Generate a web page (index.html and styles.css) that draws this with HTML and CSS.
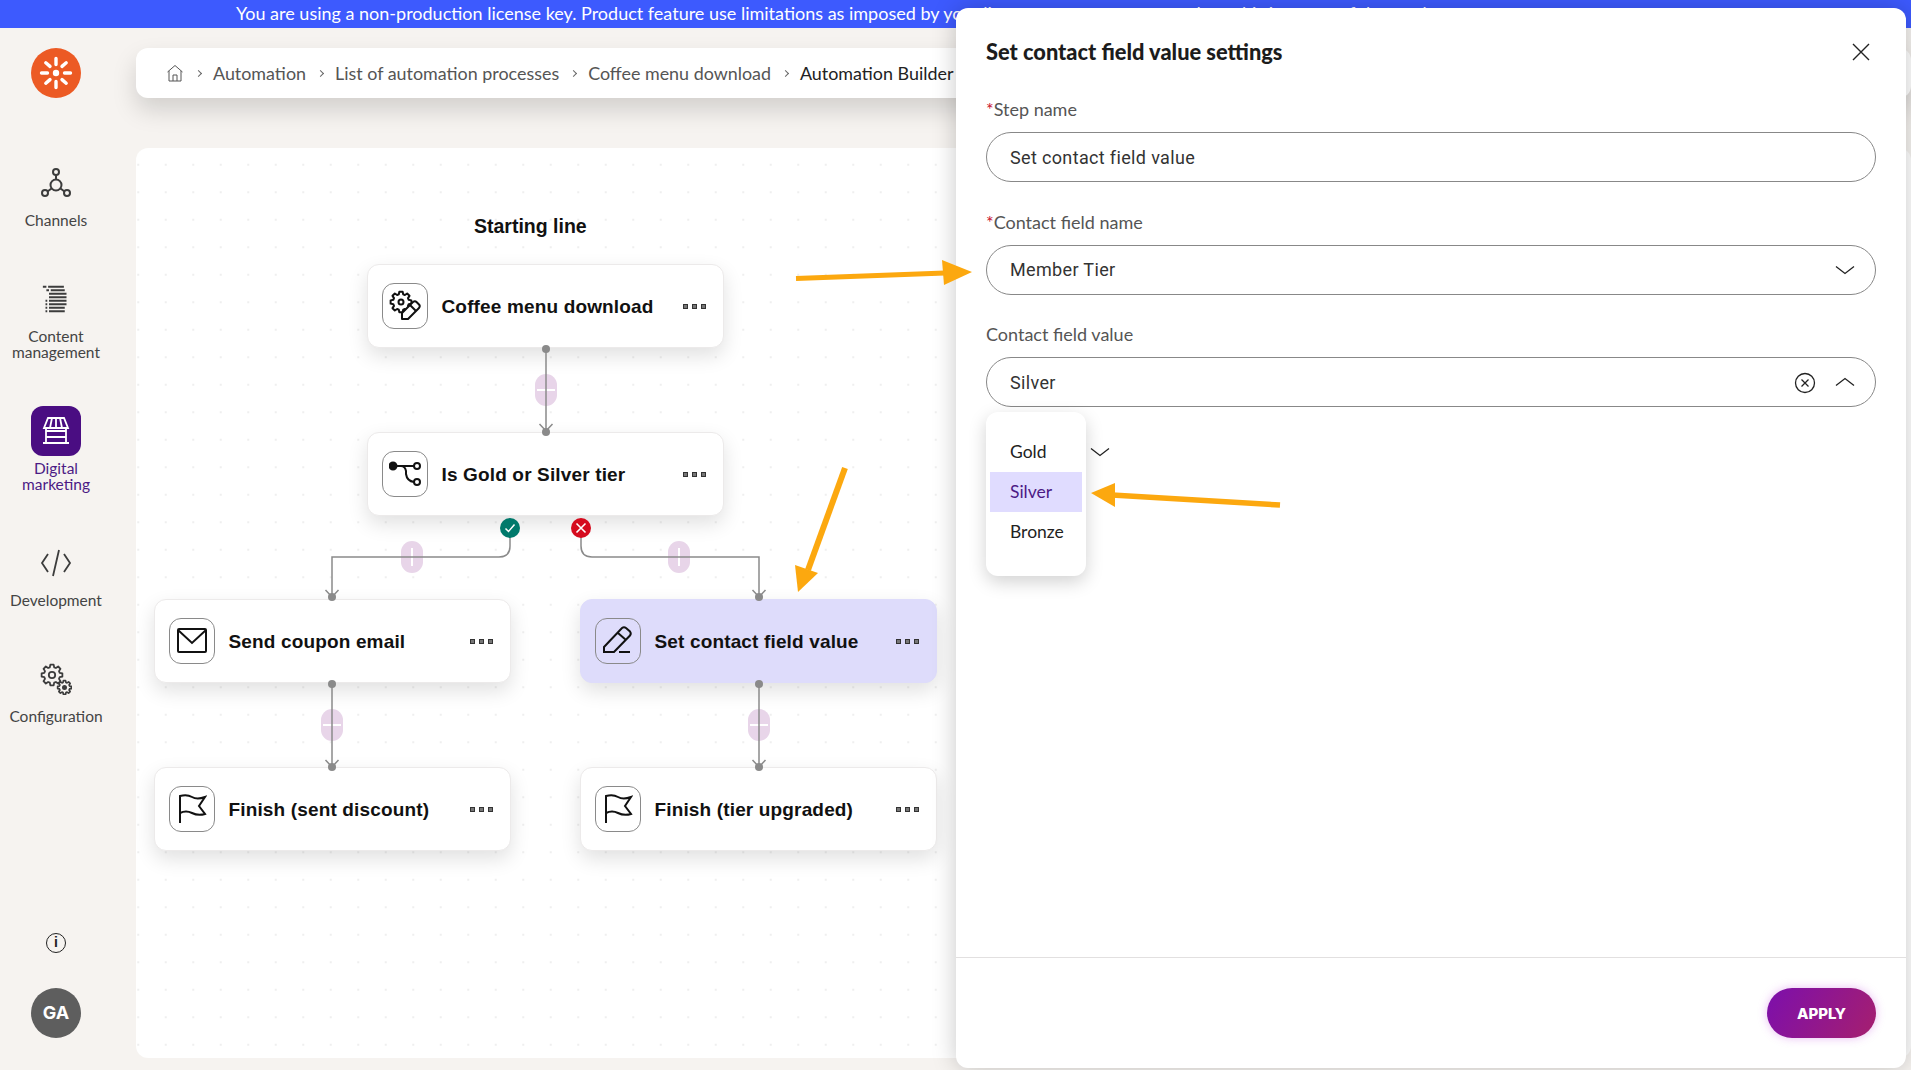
FILE: index.html
```html
<!DOCTYPE html>
<html lang="en">

<head>
  <meta charset="UTF-8">
  <title>Automation Builder</title>
  <link rel="stylesheet" href="styles.css">
</head>

<body>

  <div class="banner">You are using a non-production license key. Product feature use limitations as imposed by your license agreement may apply to this instance of the product.</div>

  <div class="layout">

    <aside class="sidebar">
      <div class="logo">
        <svg width="50" height="50" viewBox="0 0 50 50">
          <g stroke="#fff" stroke-width="3.4" stroke-linecap="round">
            <path d="M25 10.5v6M25 33.5v6M10.5 25h6M33.5 25h6M14.8 14.8l4.2 3.6M31 31.6l4.2 3.6M35.2 14.8l-4.2 3.6M19 31.6l-4.2 3.6"/>
          </g>
          <circle cx="25" cy="25" r="3.2" fill="#fff"/>
        </svg>
      </div>

      <nav class="nav">
        <div class="nav-item">
          <div class="nav-icon">
            <svg width="30" height="30" viewBox="0 0 30 30" fill="none" stroke="#3c3c3c" stroke-width="2">
              <circle cx="15" cy="4" r="3"/>
              <circle cx="15" cy="17" r="5.5"/>
              <circle cx="4" cy="25" r="3"/>
              <circle cx="26" cy="25" r="3"/>
              <path d="M15 7v4.5M10.5 20.5l-4 3M19.5 20.5l4 3"/>
            </svg>
          </div>
          <span>Channels</span>
        </div>

        <div class="nav-item">
          <div class="nav-icon">
            <svg width="28" height="30" viewBox="0 0 32 32" fill="none" stroke="#3c3c3c" stroke-width="2.2">
              <path d="M1 2h4M7 2h18M5 6h3M10 6h16M8 10h20M8 14h20M4 18h2M8 18h20M4 22h2M8 22h20M4 26h2M8 26h18M4 30h2M8 30h18"/>
            </svg>
          </div>
          <span>Content<br>management</span>
        </div>

        <div class="nav-item active">
          <div class="nav-icon">
            <svg width="30" height="30" viewBox="0 0 30 30" fill="none" stroke="#fff" stroke-width="1.8">
              <path d="M7 2h16l4 10H3zM11 2l-2 10M19 2l2 10M15 2v10"/>
              <path d="M5 12v15M25 12v15M2 27h26M5 21h20M5 15h20"/>
            </svg>
          </div>
          <span>Digital<br>marketing</span>
        </div>

        <div class="nav-item">
          <div class="nav-icon">
            <svg width="32" height="28" viewBox="0 0 32 28" fill="none" stroke="#3c3c3c" stroke-width="1.8">
              <path d="M8 5L2 14l6 9M24 5l6 9-6 9M19 1l-6 26"/>
            </svg>
          </div>
          <span>Development</span>
        </div>

        <div class="nav-item">
          <div class="nav-icon">
            <svg width="32" height="32" viewBox="0 0 32 32" fill="none" stroke="#3c3c3c" stroke-width="1.8" stroke-linejoin="round">
              <defs>
                <polygon id="gear" points="10.37,-1.64 10.37,1.64 7.69,2.2 7,3.88 8.49,6.17 6.17,8.49 3.88,7 2.2,7.69 1.64,10.37 -1.64,10.37 -2.2,7.69 -3.88,7 -6.17,8.49 -8.49,6.17 -7,3.88 -7.69,2.2 -10.37,1.64 -10.37,-1.64 -7.69,-2.2 -7,-3.88 -8.49,-6.17 -6.17,-8.49 -3.88,-7 -2.2,-7.69 -1.64,-10.37 1.64,-10.37 2.2,-7.69 3.88,-7 6.17,-8.49 8.49,-6.17 7,-3.88 7.69,-2.2"/>
              </defs>
              <use href="#gear" x="12" y="12"/>
              <circle cx="12" cy="12" r="3.2"/>
              <g transform="translate(24.5 24.5) scale(.66)" stroke-width="2.6">
                <use href="#gear" fill="#f6f3f0"/>
              </g>
              <circle cx="24.5" cy="24.5" r="1.6" fill="#3c3c3c"/>
            </svg>
          </div>
          <span>Configuration</span>
        </div>
      </nav>

      <div class="side-bottom">
        <div class="info">i</div>
        <div class="avatar">GA</div>
      </div>
    </aside>

    <main class="main">

      <div class="breadcrumb">
        <svg width="18" height="18" viewBox="0 0 18 18" fill="none" stroke="#555" stroke-width="1">
          <path d="M1.5 8L9 1.5 16.5 8M3 7v10h12V7M7 17v-6h4v6"/>
        </svg>
        <span class="sep"></span>
        <span>Automation</span>
        <span class="sep"></span>
        <span>List of automation processes</span>
        <span class="sep"></span>
        <span>Coffee menu download</span>
        <span class="sep"></span>
        <span class="current">Automation Builder</span>
      </div>

      <div class="canvas">
        <div class="start-title">Starting line</div>

        <!-- connectors, coordinates are relative to the canvas -->
        <svg class="wires" width="830" height="910" viewBox="0 0 830 910" fill="none">
          <g stroke="#8a8a8a" stroke-width="1.5">
            <path d="M410 201v82M403.5 276l6.5 7 6.5-7"/>
            <path d="M374 380v18q0 11-11 11H196v40M189.5 442l6.5 7 6.5-7"/>
            <path d="M445 380v18q0 11 11 11h167v40M616.5 442l6.5 7 6.5-7"/>
            <path d="M196 536v83M189.5 612l6.5 7 6.5-7"/>
            <path d="M623 536v83M616.5 612l6.5 7 6.5-7"/>
          </g>
          <g fill="#8a8a8a">
            <circle cx="410" cy="201" r="4"/><circle cx="410" cy="284" r="4"/>
            <circle cx="196" cy="449" r="4"/><circle cx="623" cy="449" r="4"/>
            <circle cx="196" cy="536" r="4"/><circle cx="196" cy="619" r="4"/>
            <circle cx="623" cy="536" r="4"/><circle cx="623" cy="619" r="4"/>
          </g>
        </svg>

        <div class="plus h" style="left: 399px; top: 226px;"></div>
        <div class="plus v" style="left: 265px; top: 393px;"></div>
        <div class="plus v" style="left: 532px; top: 393px;"></div>
        <div class="plus h" style="left: 185px; top: 561px;"></div>
        <div class="plus h" style="left: 612px; top: 561px;"></div>

        <div class="mark ok" style="left: 364px; top: 370px;">
          <svg width="12" height="12" viewBox="0 0 12 12" fill="none" stroke="#fff" stroke-width="1.5"><path d="M1.5 6.5l3 3 6-7"/></svg>
        </div>
        <div class="mark bad" style="left: 435px; top: 370px;">
          <svg width="12" height="12" viewBox="0 0 12 12" fill="none" stroke="#fff" stroke-width="1.6"><path d="M1.5 1.5l9 9M10.5 1.5l-9 9"/></svg>
        </div>

        <div class="node" style="left: 231px; top: 116px;">
          <div class="node-icon">
            <svg width="32" height="32" viewBox="0 0 32 32" fill="none" stroke="#111" stroke-width="2" stroke-linejoin="round">
              <use href="#gear" x="12" y="12"/>
              <circle cx="12" cy="12" r="2.5"/>
              <path d="M13 29v-6L24 12q2-1.5 3.5 0l2.5 2.5q1.5 1.5 0 3.5L19 29z" fill="#fff"/>
              <path d="M21 15l6 6"/>
            </svg>
          </div>
          <span class="node-name">Coffee menu download</span>
          <span class="dots"><i></i><i></i><i></i></span>
        </div>

        <div class="node" style="left: 231px; top: 284px;">
          <div class="node-icon">
            <svg width="32" height="32" viewBox="0 0 32 32" fill="none" stroke="#111" stroke-width="2">
              <circle cx="4" cy="8" r="3.5" fill="#111"/>
              <circle cx="28" cy="8" r="3"/>
              <circle cx="28" cy="24" r="3"/>
              <path d="M7 8h18M12 8q4 0 5 5v3q1 7 8 8"/>
            </svg>
          </div>
          <span class="node-name">Is Gold or Silver tier</span>
          <span class="dots"><i></i><i></i><i></i></span>
        </div>

        <div class="node" style="left: 18px; top: 451px;">
          <div class="node-icon">
            <svg width="30" height="26" viewBox="0 0 30 26" fill="none" stroke="#111" stroke-width="2">
              <rect x="1" y="1" width="28" height="23" rx="1"/>
              <path d="M1 2l14 13L29 2"/>
            </svg>
          </div>
          <span class="node-name">Send coupon email</span>
          <span class="dots"><i></i><i></i><i></i></span>
        </div>

        <div class="node selected" style="left: 444px; top: 451px;">
          <div class="node-icon">
            <svg width="32" height="32" viewBox="0 0 32 32" fill="none" stroke="#111" stroke-width="2">
              <path d="M2 22L20 3q2-1.5 4 0l4 3.5q1.5 2 0 4L12 27H2zM16 8l8 7M17 27h11"/>
            </svg>
          </div>
          <span class="node-name">Set contact field value</span>
          <span class="dots"><i></i><i></i><i></i></span>
        </div>

        <div class="node" style="left: 18px; top: 619px;">
          <div class="node-icon">
            <svg width="30" height="32" viewBox="0 0 30 32" fill="none" stroke="#111" stroke-width="2">
              <path d="M3 30V3q7-2 12 1t13 0l-6 9 6 8q-7 2-13-1t-12 0"/>
            </svg>
          </div>
          <span class="node-name">Finish (sent discount)</span>
          <span class="dots"><i></i><i></i><i></i></span>
        </div>

        <div class="node" style="left: 444px; top: 619px;">
          <div class="node-icon">
            <svg width="30" height="32" viewBox="0 0 30 32" fill="none" stroke="#111" stroke-width="2">
              <path d="M3 30V3q7-2 12 1t13 0l-6 9 6 8q-7 2-13-1t-12 0"/>
            </svg>
          </div>
          <span class="node-name">Finish (tier upgraded)</span>
          <span class="dots"><i></i><i></i><i></i></span>
        </div>
      </div>
    </main>
  </div>

  <section class="panel">
    <header class="panel-head">
      <h2>Set contact field value settings</h2>
      <svg width="20" height="20" viewBox="0 0 20 20" fill="none" stroke="#222" stroke-width="1.4"><path d="M2 2l16 16M18 2L2 18"/></svg>
    </header>

    <div class="panel-body">
      <div class="field">
        <label><b>*</b>Step name</label>
        <div class="input">Set contact field value</div>
      </div>
      <div class="field">
        <label><b>*</b>Contact field name</label>
        <div class="input">Member Tier
          <svg class="chev" width="20" height="10" viewBox="0 0 20 10" fill="none" stroke="#222" stroke-width="1.3"><path d="M1 1.5l9 7 9-7"/></svg>
        </div>
      </div>
      <div class="field">
        <label>Contact field value</label>
        <div class="input">Silver
          <svg class="clear" width="22" height="22" viewBox="0 0 22 22" fill="none" stroke="#222" stroke-width="1.3"><circle cx="11" cy="11" r="9.5"/><path d="M7.5 7.5l7 7M14.5 7.5l-7 7"/></svg>
          <svg class="chev" width="20" height="10" viewBox="0 0 20 10" fill="none" stroke="#222" stroke-width="1.3"><path d="M1 8.5l9-7 9 7"/></svg>
        </div>
        <div class="menu">
          <div class="opt">Gold</div>
          <div class="opt on">Silver</div>
          <div class="opt">Bronze</div>
        </div>
        <svg class="stray" width="20" height="10" viewBox="0 0 20 10" fill="none" stroke="#222" stroke-width="1.3"><path d="M1 1.5l9 7 9-7"/></svg>
      </div>
    </div>

    <footer class="panel-foot">
      <button class="apply">APPLY</button>
    </footer>
  </section>

  <!-- hand drawn annotation arrows on top of the screenshot -->
  <svg class="arrows" width="1911" height="1070" viewBox="0 0 1911 1070" fill="#fca80f" stroke="#fca80f">
    <path d="M796 278.5L945 273" stroke-width="5" fill="none"/>
    <path d="M972 272l-30-12 2 25z" stroke="none"/>
    <path d="M845 468l-37 102" stroke-width="6" fill="none"/>
    <path d="M798 592l-3-27 23 8z" stroke="none"/>
    <path d="M1280 505l-168-10" stroke-width="5.5" fill="none"/>
    <path d="M1091 493l24-10v24z" stroke="none"/>
  </svg>

</body>

</html>
```

FILE: styles.css
```css
* {
  box-sizing: border-box;
}

html,
body {
  margin: 0;
  height: 100%;
}

body {
  display: flex;
  flex-direction: column;
  height: 1070px;
  overflow: hidden;
  position: relative;
  background-color: #f6f3f0;
  font-family: "Lato", sans-serif;
  color: #333;
}

.banner {
  height: 28px;
  flex-shrink: 0;
  background-color: #3d5afe;
  color: #fff;
  font-size: 18px;
  line-height: 27px;
  padding-left: 236px;
  white-space: nowrap;
  overflow: hidden;
}

.layout {
  display: flex;
  flex: 1;
  min-height: 0;
}

.sidebar {
  width: 112px;
  flex-shrink: 0;
  display: flex;
  flex-direction: column;
  align-items: center;
  padding: 20px 0 32px;
}

.logo {
  width: 50px;
  height: 50px;
  border-radius: 50%;
  background-color: #ec5a24;
}

.nav {
  display: flex;
  flex-direction: column;
  gap: 46px;
  margin-top: 60px;
  width: 100%;
}

.nav-item {
  display: flex;
  flex-direction: column;
  align-items: center;
  text-align: center;
  font-size: 15.5px;
  line-height: 16px;
  color: #444;
}

.nav-icon {
  width: 50px;
  height: 50px;
  margin-bottom: 4px;
  border-radius: 12px;
  display: flex;
  align-items: center;
  justify-content: center;
}

.nav-item.active {
  color: #4c1a85;
}

.nav-item.active .nav-icon {
  background-color: #4a0d82;
}

.side-bottom {
  margin-top: auto;
  display: flex;
  flex-direction: column;
  align-items: center;
  gap: 35px;
}

.info {
  width: 20px;
  height: 20px;
  border: 1.5px solid #222;
  border-radius: 50%;
  font-family: "Liberation Sans", sans-serif;
  font-weight: bold;
  font-size: 14px;
  line-height: 17px;
  text-align: center;
  color: #222;
}

.avatar {
  width: 50px;
  height: 50px;
  border-radius: 50%;
  background-color: #5e5e5e;
  color: #fff;
  font-family: "Inter", sans-serif;
  font-weight: 700;
  font-size: 18px;
  line-height: 50px;
  text-align: center;
}

.main {
  flex: 1;
  min-width: 0;
  margin-left: 24px;
  padding: 20px 0 12px;
  display: flex;
  flex-direction: column;
  gap: 50px;
}

.breadcrumb {
  height: 50px;
  flex-shrink: 0;
  display: flex;
  align-items: center;
  gap: 12px;
  padding-left: 30px;
  background-color: #fff;
  border-radius: 12px;
  box-shadow: 0 12px 24px rgba(0, 0, 0, 0.15);
  font-size: 17.9px;
  color: #555;
}

.breadcrumb .current {
  color: #222;
}

.sep {
  width: 5px;
  height: 5px;
  border-top: 1px solid #666;
  border-right: 1px solid #666;
  transform: rotate(45deg);
}

.canvas {
  flex: 1;
  position: relative;
  background-color: #fff;
  background-image: radial-gradient(#efefef 0.8px, transparent 1px);
  background-size: 27.5px 27.5px;
  background-position: 16px 3px;
  border-radius: 12px;
  overflow: hidden;
}

.start-title {
  position: absolute;
  left: 338px;
  top: 67px;
  font-family: "Liberation Sans", sans-serif;
  font-weight: bold;
  font-size: 19.5px;
  color: #111;
}

.wires {
  position: absolute;
  left: 0;
  top: 0;
  z-index: 2;
}

.plus {
  position: absolute;
  z-index: 1;
  width: 22px;
  height: 32px;
  border-radius: 11px;
  background-color: #e8d5e9;
}

.plus::after {
  content: "";
  position: absolute;
  background-color: #fff;
}

.plus.h::after {
  left: 2px;
  right: 2px;
  top: 15px;
  height: 2px;
}

.plus.v::after {
  top: 7px;
  bottom: 7px;
  left: 10px;
  width: 2px;
}

.mark {
  position: absolute;
  z-index: 3;
  width: 20px;
  height: 20px;
  border-radius: 50%;
  display: flex;
  align-items: center;
  justify-content: center;
}

.mark.ok {
  background-color: #00796b;
}

.mark.bad {
  background-color: #d50b1e;
}

.node {
  position: absolute;
  width: 357px;
  height: 84px;
  display: flex;
  align-items: center;
  padding: 0 17px 0 14px;
  background-color: #fff;
  border: 1px solid #eceaea;
  border-radius: 12px;
  box-shadow: 0 8px 20px rgba(0, 0, 0, 0.12);
}

.node.selected {
  background-color: #dedcfb;
  border-color: #dedcfb;
}

.node-icon {
  width: 46px;
  height: 46px;
  flex-shrink: 0;
  display: flex;
  align-items: center;
  justify-content: center;
  border: 1px solid #8a8a8a;
  border-radius: 12px;
  margin-right: 13.5px;
}

.node-name {
  flex: 1;
  padding-top: 2px;
  font-family: "Liberation Sans", sans-serif;
  font-weight: bold;
  font-size: 19px;
  letter-spacing: 0.15px;
  color: #111;
  white-space: nowrap;
}

.dots {
  display: flex;
  gap: 4px;
}

.dots i {
  width: 5px;
  height: 5px;
  border: 1px solid #333;
  background-color: #777;
}

.panel {
  position: absolute;
  z-index: 5;
  left: 956px;
  top: 8px;
  width: 950px;
  height: 1060px;
  display: flex;
  flex-direction: column;
  background-color: #fff;
  border-radius: 12px;
  box-shadow: 0 0 24px rgba(0, 0, 0, 0.22);
}

.panel-head {
  display: flex;
  align-items: center;
  justify-content: space-between;
  padding: 0 35px 0 30px;
  height: 87px;
  flex-shrink: 0;
}

.panel-head h2 {
  margin: 0;
  font-size: 21.8px;
  font-weight: 900;
  color: #1c1c1c;
}

.panel-body {
  flex: 1;
  display: flex;
  flex-direction: column;
  gap: 30.5px;
  padding: 5px 30px 0;
  font-family: "Roboto", sans-serif;
}

.field {
  position: relative;
}

.field label {
  display: block;
  margin-bottom: 14px;
  font-family: "Lato", sans-serif;
  font-size: 18px;
  line-height: 18px;
  color: #555;
}

.field label b {
  font-weight: normal;
  color: #c8102e;
}

.input {
  height: 50px;
  display: flex;
  align-items: center;
  position: relative;
  padding: 0 23px;
  border: 1px solid #888;
  border-radius: 25px;
  font-size: 18px;
  letter-spacing: 0.35px;
  color: #333;
}

.chev {
  position: absolute;
  right: 20px;
  top: 19px;
}

.clear {
  position: absolute;
  right: 59px;
  top: 14px;
}

.menu {
  position: absolute;
  z-index: 2;
  left: 0;
  top: 87px;
  width: 100px;
  height: 164px;
  padding-top: 20px;
  background-color: #fff;
  border-radius: 12px;
  box-shadow: 0 6px 18px rgba(0, 0, 0, 0.18);
  font-family: "Lato", sans-serif;
  font-size: 17.5px;
  color: #222;
}

.opt {
  height: 40px;
  line-height: 40px;
  margin: 0 4px;
  padding-left: 20px;
}

.opt.on {
  background-color: #e0dcff;
  color: #4c1a85;
}

.stray {
  position: absolute;
  left: 104px;
  top: 122px;
}

.panel-foot {
  flex-shrink: 0;
  height: 111px;
  display: flex;
  justify-content: flex-end;
  padding: 30px 30px 0 0;
  border-top: 1px solid #e2e0e0;
}

.apply {
  width: 109px;
  height: 50px;
  border: 0;
  border-radius: 25px;
  background: linear-gradient(120deg, #7c0fac, #a61f6e);
  box-shadow: 0 0 10px rgba(190, 60, 220, 0.35);
  color: #fff;
  font-family: "Inter", sans-serif;
  font-weight: 800;
  font-size: 15px;
}

.arrows {
  position: absolute;
  left: 0;
  top: 0;
  z-index: 6;
  pointer-events: none;
}
```
